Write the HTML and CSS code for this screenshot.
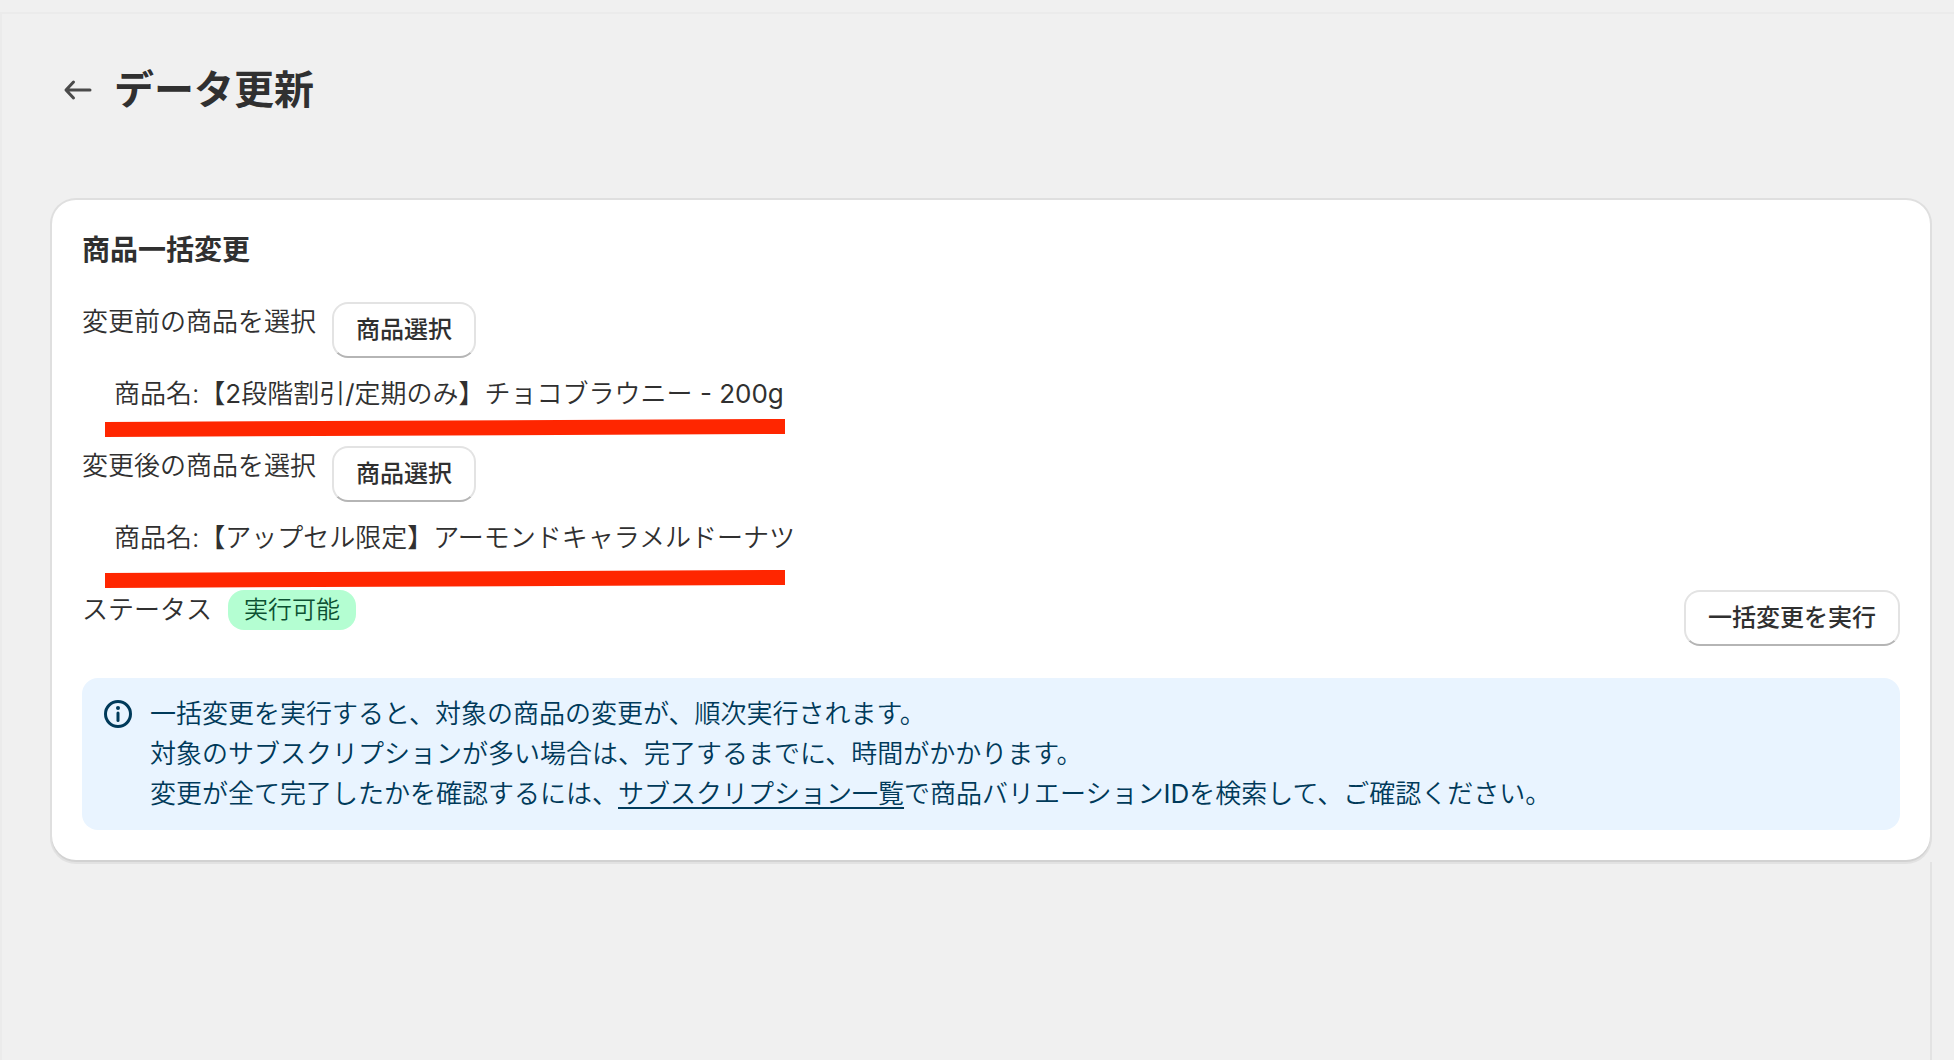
FILE: index.html
```html
<!DOCTYPE html>
<html lang="ja">
<head>
<meta charset="utf-8">
<title>データ更新</title>
<link rel="stylesheet" href="styles.css">
</head>
<body>
<main class="frame">
  <header class="page-header">
    <a class="back" href="#" aria-label="戻る">
      <svg width="40" height="40" viewBox="0 0 40 40" fill="none" stroke="#4a4a4a" stroke-width="3" stroke-linecap="round" stroke-linejoin="round"><path d="M32 20H8.500M15.500 12 8 20l7.500 8"/></svg>
    </a>
    <h1 class="page-title">データ更新</h1>
  </header>

  <section class="card">
    <h2 class="card-title">商品一括変更</h2>

    <div class="group">
      <div class="row">
        <span id="before">変更前の商品を選択</span>
        <button class="button" type="button" aria-describedby="before">商品選択</button>
      </div>
      <p class="product">商品名:【<span class="latin">2</span>段階割引<span class="latin">/</span>定期のみ】チョコブラウニー <span class="latin">- 200g</span>
        <svg class="marker marker-before" width="680" height="18" viewBox="0 0 680 18"><path fill="#ff2600" d="M0 3 680 0v15L0 18z"/></svg>
      </p>
    </div>

    <div class="group">
      <div class="row">
        <span id="after">変更後の商品を選択</span>
        <button class="button" type="button" aria-describedby="after">商品選択</button>
      </div>
      <p class="product">商品名:【アップセル限定】アーモンドキャラメルドーナツ
        <svg class="marker marker-after" width="680" height="18" viewBox="0 0 680 18"><path fill="#ff2600" d="M0 3 680 0v15L0 18z"/></svg>
      </p>
    </div>

    <div class="row">
      <span>ステータス</span>
      <span class="badge">実行可能</span>
      <button class="button run" type="button">一括変更を実行</button>
    </div>

    <div class="banner">
      <svg class="info" width="28" height="28" viewBox="0 0 28 28"><circle cx="14" cy="14" r="12.500" fill="none" stroke="#003a5a" stroke-width="3"/><circle cx="14" cy="8" r="2" fill="#003a5a"/><path d="M14 13v7.500" stroke="#003a5a" stroke-width="3" stroke-linecap="round"/></svg>
      <p class="banner-text">一括変更を実行すると、対象の商品の変更が、順次実行されます。<br>対象のサブスクリプションが多い場合は、完了するまでに、時間がかかります。<br>変更が全て完了したかを確認するには、<a href="#">サブスクリプション一覧</a>で商品バリエーション<span class="latin">ID</span>を検索して、ご確認ください。</p>
    </div>
  </section>

  <div class="rest"></div>
</main>
</body>
</html>
```

FILE: styles.css
```css
* {
  box-sizing: border-box;
}

body {
  margin: 0;
  padding-top: 12px;
  min-height: 100vh;
  display: flex;
  flex-direction: column;
  background: #f0f0f0;
  color: #303030;
  font: 350 26px/40px Inter, "Noto Sans CJK JP", sans-serif;
}

h1, h2, p {
  margin: 0;
}

.frame {
  flex: 1;
  display: flex;
  flex-direction: column;
  padding: 52px 24px 0 50px;
  border-top: 2px solid #ebebeb;
  border-left: 2px solid #ebebeb;
}

.page-header {
  display: flex;
  align-items: center;
  gap: 16px;
  padding-left: 6px;
  margin-bottom: 86px;
}

.back {
  display: flex;
}

.page-title {
  font-size: 40px;
  line-height: 48px;
  font-weight: 700;
}

.card {
  display: flex;
  flex-direction: column;
  gap: 32px;
  padding: 30px;
  border-radius: 24px;
  background: #fff;
  box-shadow: 0 2px 0 0 #d2d2d2, 0 0 0 2px #dfdfdf, 0 2px 0 2px #e2e2e2;
}

.card-title {
  font-size: 28px;
  font-weight: 700;
}

.group {
  display: flex;
  flex-direction: column;
  gap: 16px;
}

.row {
  display: flex;
  align-items: flex-start;
  gap: 16px;
}

.button {
  height: 56px;
  padding: 0 22px;
  border: 2px solid #e3e3e3;
  border-bottom-color: #b5b5b5;
  border-radius: 16px;
  background: #fff;
  color: #303030;
  font: inherit;
  font-size: 24px;
  font-weight: 500;
}

.run {
  margin-left: auto;
}

.latin {
  font-weight: 400;
}

.product {
  position: relative;
  padding-left: 32px;
}

.marker {
  position: absolute;
  left: 23px;
}

.marker-before {
  top: 45px;
}

.marker-after {
  top: 52px;
}

.badge {
  padding: 0 16px;
  border-radius: 16px;
  background: #b4fed2;
  color: #0c5132;
  font-size: 24px;
}

.banner {
  display: flex;
  align-items: flex-start;
  gap: 18px;
  padding: 16px 22px;
  border-radius: 16px;
  background: #e9f4ff;
  color: #003a5a;
}

.info {
  flex: none;
  margin-top: 6px;
}

.banner a {
  color: inherit;
  text-decoration-thickness: 2px;
  text-underline-offset: 4px;
  text-decoration-skip-ink: none;
}

.rest {
  flex: 1;
  margin: 2px -2px 0 0;
  border-right: 2px solid #e3e3e3;
}
```
